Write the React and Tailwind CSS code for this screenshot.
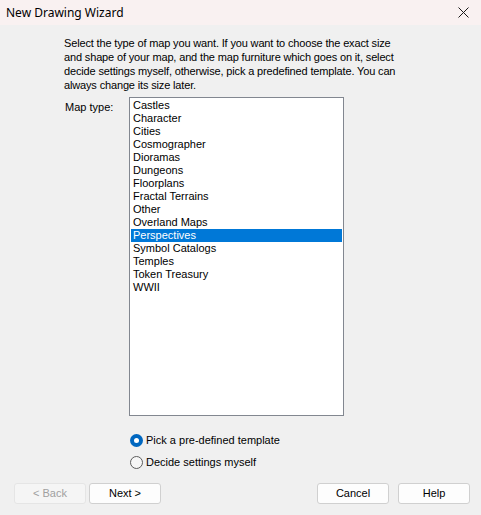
import React from 'react';

const mapTypes = [
  'Castles',
  'Character',
  'Cities',
  'Cosmographer',
  'Dioramas',
  'Dungeons',
  'Floorplans',
  'Fractal Terrains',
  'Other',
  'Overland Maps',
  'Perspectives',
  'Symbol Catalogs',
  'Temples',
  'Token Treasury',
  'WWII',
];

const Radio = ({ checked, label }) => (
  <div className="flex items-center h-[22px]">
    {checked ? (
      <span className="w-[13px] h-[13px] rounded-full bg-[#0067c0] flex items-center justify-center">
        <span className="w-[5px] h-[5px] rounded-full bg-white" />
      </span>
    ) : (
      <span className="w-[13px] h-[13px] rounded-full border border-[#5c5c5c] bg-[#f6f6f6]" />
    )}
    <span className="ml-[3px]">{label}</span>
  </div>
);

const Button = ({ children, disabled }) => (
  <button
    className={
      'w-[72px] h-[21px] rounded-[3px] border text-[11px] leading-none ' +
      (disabled
        ? 'bg-[#f5f5f5] border-[#e5e5e5] text-[#a0a0a0]'
        : 'bg-[#fdfdfd] border-[#d0d0d0] text-black')
    }
  >
    {children}
  </button>
);

const App = () => {
  return (
    <div className="w-[481px] h-[515px] bg-[#f0f0f0] flex flex-col overflow-hidden font-['Liberation_Sans',Arial,sans-serif] text-[11px] text-black">
      <div className="h-[25px] bg-[#f9f1f1] flex items-center justify-between pl-[6px] pr-[12px] shrink-0">
        <span className="font-['Noto_Sans',sans-serif] text-[12px]">New Drawing Wizard</span>
        <svg width="11" height="11" viewBox="0 0 11 11">
          <path d="M0.5 0.5 L10.5 10.5 M10.5 0.5 L0.5 10.5" stroke="#1a1a1a" strokeWidth="1" />
        </svg>
      </div>

      <div className="pl-[64px] pr-[70px] pt-[11px] leading-[14px] tracking-[-0.15px]">
        Select the type of map you want. If you want to choose the exact size and shape of your map, and the map furniture which goes on it, select decide settings myself, otherwise, pick a predefined template. You can always change its size later.
      </div>

      <div className="flex pl-[65px] mt-[5px]">
        <div className="w-[64px] pt-[2px]">Map type:</div>
        <div className="w-[215px] h-[319px] bg-white border border-[#828790] p-[1px] leading-[13px]">
          {mapTypes.map((t) => (
            <div
              key={t}
              className={
                'h-[13px] pl-[2px] ' +
                (t === 'Perspectives' ? 'bg-[#0078d7] text-white' : '')
              }
            >
              {t}
            </div>
          ))}
        </div>
      </div>

      <div className="pl-[130px] mt-[13px]">
        <Radio checked label="Pick a pre-defined template" />
        <Radio label="Decide settings myself" />
      </div>

      <div className="flex items-center pl-[14px] pr-[11px] mt-[10px]">
        <div className="flex gap-[3px]">
          <Button disabled>&lt; Back</Button>
          <Button>Next &gt;</Button>
        </div>
        <div className="flex gap-[9px] ml-auto">
          <Button>Cancel</Button>
          <Button>Help</Button>
        </div>
      </div>
    </div>
  );
};

export default App;
